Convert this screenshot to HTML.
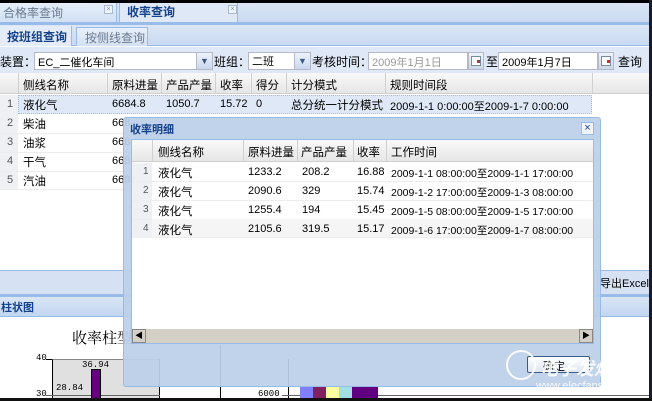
<!DOCTYPE html>
<html><head><meta charset="utf-8"><style>
*{margin:0;padding:0;box-sizing:border-box}
body{width:652px;height:401px;overflow:hidden;position:relative;background:#fff;font-family:"Liberation Sans","Noto Sans CJK SC",sans-serif;font-size:11px;color:#000}
.a{position:absolute}
.t{position:absolute;white-space:nowrap}
.c{font-size:11.5px}
</style></head><body>
<div class="a" style="left:0;top:0;width:652px;height:3px;background:#000"></div>
<div class="a" style="left:0;top:3px;width:652px;height:20px;background:linear-gradient(#d9e5f5,#c8d9f0)"></div>
<div class="a" style="left:0;top:3px;width:117px;height:19px;background:linear-gradient(#e6eef9,#d2e0f3);border-right:1px solid #99bbe8"></div>
<div class="t" style="left:3px;top:4px;color:#6a7a90;font-size:12px">合格率查询</div>
<div class="a" style="left:104px;top:5px;width:9px;height:9px;border:1px solid #a9b9d0;background:#eef3fa;font-size:7px;line-height:7px;text-align:center;color:#8090a8">×</div>
<div class="a" style="left:119px;top:3px;width:119px;height:20px;background:#dfe8f6;border-left:1px solid #99bbe8;border-right:1px solid #99bbe8"></div>
<div class="t" style="left:127px;top:3px;color:#15428b;font-size:12px;font-weight:bold">收率查询</div>
<div class="a" style="left:228px;top:5px;width:9px;height:9px;border:1px solid #a9b9d0;background:#eef3fa;font-size:7px;line-height:7px;text-align:center;color:#8090a8">×</div>
<div class="a" style="left:0;top:22px;width:652px;height:3px;background:#99bbe8"></div>
<div class="a" style="left:0;top:25px;width:652px;height:21px;background:linear-gradient(#dbe6f6,#c9daf1);border-bottom:1px solid #99bbe8"></div>
<div class="a" style="left:0;top:26px;width:72px;height:20px;background:#e3ecf8;border-right:1px solid #99bbe8"></div>
<div class="t" style="left:7px;top:28px;color:#15428b;font-weight:bold;font-size:12px">按班组查询</div>
<div class="a" style="left:76px;top:27px;width:72px;height:19px;background:linear-gradient(#e8eff9,#d4e1f3);border:1px solid #99bbe8;border-bottom:none"></div>
<div class="t" style="left:85px;top:29px;color:#6a7a90;font-size:12px">按侧线查询</div>
<div class="a" style="left:0;top:47px;width:652px;height:26px;background:#dfe8f6"></div>
<div class="t" style="left:0;top:53px;font-size:12px">装置：</div>
<div class="a" style="left:34px;top:52px;width:178px;height:18px;background:#fff;border:1px solid #b5b8c8"></div>
<div class="t" style="left:38px;top:54px;font-size:11px">EC_二催化车间</div>
<div class="a" style="left:196px;top:52px;width:17px;height:18px;background:linear-gradient(#eef3fb,#c8d8ee);border:1px solid #b5b8c8;color:#3a5a8a;font-size:9px;text-align:center;line-height:16px">▼</div>
<div class="t" style="left:214px;top:53px;font-size:12px">班组：</div>
<div class="a" style="left:248px;top:52px;width:62px;height:18px;background:#fff;border:1px solid #b5b8c8"></div>
<div class="t" style="left:252px;top:53px;font-size:11px">二班</div>
<div class="a" style="left:294px;top:52px;width:17px;height:18px;background:linear-gradient(#eef3fb,#c8d8ee);border:1px solid #b5b8c8;color:#3a5a8a;font-size:9px;text-align:center;line-height:16px">▼</div>
<div class="t" style="left:312px;top:53px;font-size:12px">考核时间：</div>
<div class="a" style="left:368px;top:52px;width:100px;height:18px;background:#fff;border:1px solid #b5b8c8"></div>
<div class="t" style="left:372px;top:54px;color:#999;font-size:11px">2009年1月1日</div>
<div class="a" style="left:468px;top:52px;width:16px;height:18px;background:linear-gradient(#f0f4fa,#ccd8e8);border:1px solid #b5b8c8"><div class="a" style="left:2px;top:3px;width:10px;height:10px;border:1px solid #7a8aa0;background:#fff"><div class="a" style="left:5px;top:3px;width:3px;height:3px;background:#c03030"></div></div></div>
<div class="t" style="left:486px;top:53px;font-size:12px">至</div>
<div class="a" style="left:498px;top:52px;width:100px;height:18px;background:#fff;border:1px solid #b5b8c8"></div>
<div class="t" style="left:502px;top:54px;font-size:11px">2009年1月7日</div>
<div class="a" style="left:598px;top:52px;width:16px;height:18px;background:linear-gradient(#f0f4fa,#ccd8e8);border:1px solid #b5b8c8"><div class="a" style="left:2px;top:3px;width:10px;height:10px;border:1px solid #7a8aa0;background:#fff"><div class="a" style="left:5px;top:3px;width:3px;height:3px;background:#c03030"></div></div></div>
<div class="t" style="left:618px;top:53px;font-size:12px">查询</div>
<div class="a" style="left:0;top:73px;width:652px;height:21px;background:linear-gradient(#f9f9f9,#e6e6e6);border-bottom:1px solid #d0d0d0"></div>
<div class="a" style="left:18px;top:73px;width:1px;height:21px;background:#d0d0d0"></div>
<div class="a" style="left:107px;top:73px;width:1px;height:21px;background:#d0d0d0"></div>
<div class="a" style="left:161px;top:73px;width:1px;height:21px;background:#d0d0d0"></div>
<div class="a" style="left:215px;top:73px;width:1px;height:21px;background:#d0d0d0"></div>
<div class="a" style="left:251px;top:73px;width:1px;height:21px;background:#d0d0d0"></div>
<div class="a" style="left:286px;top:73px;width:1px;height:21px;background:#d0d0d0"></div>
<div class="a" style="left:385px;top:73px;width:1px;height:21px;background:#d0d0d0"></div>
<div class="a" style="left:592px;top:73px;width:1px;height:21px;background:#d0d0d0"></div>
<div class="t c" style="left:23px;top:77px">侧线名称</div>
<div class="t c" style="left:112px;top:77px">原料进量</div>
<div class="t c" style="left:166px;top:77px">产品产量</div>
<div class="t c" style="left:220px;top:77px">收率</div>
<div class="t c" style="left:256px;top:77px">得分</div>
<div class="t c" style="left:291px;top:77px">计分模式</div>
<div class="t c" style="left:390px;top:77px">规则时间段</div>
<div class="a" style="left:0;top:95px;width:18px;height:95px;background:#eef0f3"></div>
<div class="a" style="left:18px;top:95px;width:574px;height:19px;background:#dfe8f6;border:1px dotted #a3bae9"></div>
<div class="a" style="left:0;top:133px;width:592px;height:1px;background:#ededed"></div>
<div class="a" style="left:0;top:152px;width:592px;height:1px;background:#ededed"></div>
<div class="a" style="left:0;top:171px;width:592px;height:1px;background:#ededed"></div>
<div class="a" style="left:0;top:189px;width:592px;height:1px;background:#ededed"></div>
<div class="t" style="left:7px;top:98px;color:#555">1</div>
<div class="t" style="left:7px;top:117px;color:#555">2</div>
<div class="t" style="left:7px;top:136px;color:#555">3</div>
<div class="t" style="left:7px;top:155px;color:#555">4</div>
<div class="t" style="left:7px;top:174px;color:#555">5</div>
<div class="t c" style="left:23px;top:97px">液化气</div>
<div class="t c" style="left:23px;top:116px">柴油</div>
<div class="t c" style="left:23px;top:135px">油浆</div>
<div class="t c" style="left:23px;top:154px">干气</div>
<div class="t c" style="left:23px;top:173px">汽油</div>
<div class="t" style="left:112px;top:98px">6684.8</div>
<div class="t" style="left:112px;top:117px">668</div>
<div class="t" style="left:112px;top:136px">668</div>
<div class="t" style="left:112px;top:155px">668</div>
<div class="t" style="left:112px;top:174px">668</div>
<div class="t" style="left:166px;top:98px">1050.7</div>
<div class="t" style="left:220px;top:98px">15.72</div>
<div class="t" style="left:256px;top:98px">0</div>
<div class="t c" style="left:291px;top:97px">总分统一计分模式</div>
<div class="t" style="left:390px;top:98px">2009-1-1 0:00:00至2009-1-7 0:00:00</div>
<div class="a" style="left:0;top:270px;width:652px;height:1px;background:#99bbe8"></div>
<div class="a" style="left:0;top:271px;width:652px;height:23px;background:#d6e2f3"></div>
<div class="t" style="left:600px;top:275px;font-size:11px">导出Excel</div>
<div class="a" style="left:0;top:294px;width:652px;height:3px;background:#99bbe8"></div>
<div class="a" style="left:0;top:297px;width:652px;height:20px;background:linear-gradient(#dae6f6,#c2d6f0);border-bottom:1px solid #99bbe8"></div>
<div class="t" style="left:1px;top:299px;color:#15428b;font-weight:bold;font-size:11px">柱状图</div>
<div class="t" style="left:72px;top:327px;font-size:15px;font-family:'Noto Serif CJK SC',serif">收率柱型</div>
<div class="a" style="left:52px;top:359px;width:108px;height:42px;background:#e0e0e0;border-left:1px solid #000;border-top:1px solid #888"></div>
<div class="a" style="left:159px;top:359px;width:1px;height:42px;background:#000"></div>
<div class="a" style="left:46px;top:359px;width:6px;height:1px;background:#000"></div>
<div class="a" style="left:46px;top:395px;width:114px;height:1px;background:#666"></div>
<div class="t" style="left:36px;top:353px;font-size:9px;font-family:'Liberation Mono',monospace">40</div>
<div class="t" style="left:36px;top:389px;font-size:9px;font-family:'Liberation Mono',monospace">30</div>
<div class="t" style="left:82px;top:360px;font-size:9px;font-family:'Liberation Mono',monospace">36.94</div>
<div class="t" style="left:56px;top:383px;font-size:9px;font-family:'Liberation Mono',monospace">28.84</div>
<div class="a" style="left:91px;top:369px;width:10px;height:32px;background:#660080;border:1px solid #000"></div>
<div class="a" style="left:220px;top:345px;width:1px;height:56px;background:#000"></div>
<div class="a" style="left:288px;top:359px;width:1px;height:42px;background:#000"></div>
<div class="t" style="left:258px;top:389px;font-size:9px;font-family:'Liberation Mono',monospace">6000</div>
<div class="a" style="left:282px;top:395px;width:370px;height:1px;background:#666"></div>
<div class="a" style="left:300px;top:387px;width:13px;height:11px;background:#8080ff"></div>
<div class="a" style="left:313px;top:387px;width:13px;height:11px;background:#802060"></div>
<div class="a" style="left:326px;top:387px;width:13px;height:11px;background:#ffffa0"></div>
<div class="a" style="left:339px;top:387px;width:13px;height:11px;background:#a0e0e0"></div>
<div class="a" style="left:352px;top:387px;width:26px;height:11px;background:#600080"></div>
<div class="a" style="left:123px;top:117px;width:478px;height:270px;background:rgba(188,208,234,0.93);border:1px solid #99bbe8;border-radius:3px"></div>
<div class="t" style="left:130px;top:121px;color:#15428b;font-weight:bold;font-size:11px">收率明细</div>
<div class="a" style="left:581px;top:122px;width:13px;height:13px;background:#f0f4fa;border:1px solid #99bbe8;color:#15428b;font-size:11px;line-height:11px;text-align:center">×</div>
<div class="a" style="left:131px;top:139px;width:463px;height:205px;background:#fff;border:1px solid #99bbe8"></div>
<div class="a" style="left:132px;top:140px;width:461px;height:22px;background:linear-gradient(#f9f9f9,#e6e6e6);border-bottom:1px solid #d0d0d0"></div>
<div class="a" style="left:152px;top:140px;width:1px;height:22px;background:#d0d0d0"></div>
<div class="a" style="left:243px;top:140px;width:1px;height:22px;background:#d0d0d0"></div>
<div class="a" style="left:297px;top:140px;width:1px;height:22px;background:#d0d0d0"></div>
<div class="a" style="left:353px;top:140px;width:1px;height:22px;background:#d0d0d0"></div>
<div class="a" style="left:386px;top:140px;width:1px;height:22px;background:#d0d0d0"></div>
<div class="t c" style="left:158px;top:144px">侧线名称</div>
<div class="t c" style="left:248px;top:144px">原料进量</div>
<div class="t c" style="left:301px;top:144px">产品产量</div>
<div class="t c" style="left:357px;top:144px">收率</div>
<div class="t c" style="left:391px;top:144px">工作时间</div>
<div class="a" style="left:132px;top:163px;width:20px;height:75px;background:#eef0f3"></div>
<div class="a" style="left:132px;top:181px;width:461px;height:1px;background:#ededed"></div>
<div class="a" style="left:132px;top:200px;width:461px;height:1px;background:#ededed"></div>
<div class="a" style="left:132px;top:219px;width:461px;height:1px;background:#ededed"></div>
<div class="a" style="left:152px;top:219px;width:441px;height:19px;background:#f5f5f5;border-bottom:1px solid #ededed"></div>
<div class="t" style="left:143px;top:166px;color:#555;font-size:10px">1</div>
<div class="t" style="left:143px;top:185px;color:#555;font-size:10px">2</div>
<div class="t" style="left:143px;top:204px;color:#555;font-size:10px">3</div>
<div class="t" style="left:143px;top:223px;color:#555;font-size:10px">4</div>
<div class="t c" style="left:158px;top:165px">液化气</div>
<div class="t c" style="left:158px;top:184px">液化气</div>
<div class="t c" style="left:158px;top:203px">液化气</div>
<div class="t c" style="left:158px;top:222px">液化气</div>
<div class="t" style="left:248px;top:166px">1233.2</div>
<div class="t" style="left:248px;top:185px">2090.6</div>
<div class="t" style="left:248px;top:204px">1255.4</div>
<div class="t" style="left:248px;top:223px">2105.6</div>
<div class="t" style="left:302px;top:166px">208.2</div>
<div class="t" style="left:302px;top:185px">329</div>
<div class="t" style="left:302px;top:204px">194</div>
<div class="t" style="left:302px;top:223px">319.5</div>
<div class="t" style="left:357px;top:166px">16.88</div>
<div class="t" style="left:357px;top:185px">15.74</div>
<div class="t" style="left:357px;top:204px">15.45</div>
<div class="t" style="left:357px;top:223px">15.17</div>
<div class="t" style="left:391px;top:166px;font-size:10.5px">2009-1-1 08:00:00至2009-1-1 17:00:00</div>
<div class="t" style="left:391px;top:185px;font-size:10.5px">2009-1-2 17:00:00至2009-1-3 08:00:00</div>
<div class="t" style="left:391px;top:204px;font-size:10.5px">2009-1-5 08:00:00至2009-1-5 17:00:00</div>
<div class="t" style="left:391px;top:223px;font-size:10.5px">2009-1-6 17:00:00至2009-1-7 08:00:00</div>
<div class="a" style="left:132px;top:328px;width:461px;height:15px;background:#d4d0c8;border-top:1px solid #fff"></div>
<div class="a" style="left:132px;top:329px;width:14px;height:14px;background:#d4d0c8;border:1px solid #888;font-size:8px;line-height:12px;text-align:center">◀</div>
<div class="a" style="left:579px;top:329px;width:14px;height:14px;background:#d4d0c8;border:1px solid #888;font-size:8px;line-height:12px;text-align:center">▶</div>
<div class="a" style="left:527px;top:356px;width:63px;height:17px;background:linear-gradient(#fff,#dde6f3);border:1px solid #3a5a8a;border-radius:2px"></div>
<div class="t" style="left:543px;top:358px;font-size:11px">确定</div>
<div class="a" style="left:506px;top:350px;width:30px;height:30px;border:2px solid rgba(255,255,255,0.9);border-radius:50%"></div>
<div class="t" style="left:540px;top:355px;color:rgba(255,255,255,0.9);font-size:18px;font-style:italic;font-weight:bold">电子发烧友</div>
<div class="t" style="left:536px;top:380px;color:rgba(255,255,255,0.9);font-size:11px">www.elecfans.com</div>
<div class="a" style="left:649px;top:0;width:3px;height:401px;background:#1a1a2a"></div>
<div class="a" style="left:0;top:398px;width:652px;height:3px;background:#111"></div>
</body></html>
